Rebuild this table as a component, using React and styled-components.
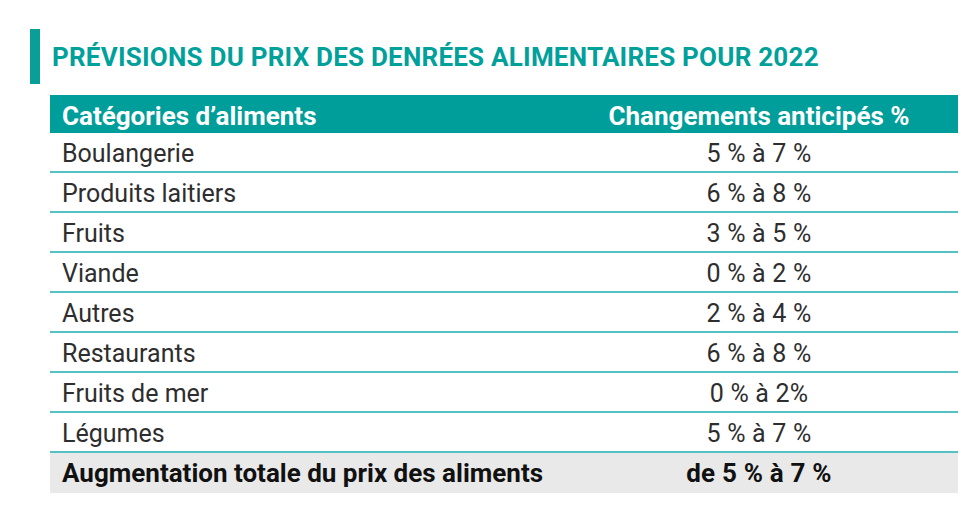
import React from "react";
import styled, { createGlobalStyle } from "styled-components";

const GlobalStyle = createGlobalStyle`
  body {
    margin: 0;
    background: #ffffff;
    font-family: Roboto, "Liberation Sans", sans-serif;
  }
`;

const rows = [
  ["Boulangerie", "5 % à 7 %"],
  ["Produits laitiers", "6 % à 8 %"],
  ["Fruits", "3 % à 5 %"],
  ["Viande", "0 % à 2 %"],
  ["Autres", "2 % à 4 %"],
  ["Restaurants", "6 % à 8 %"],
  ["Fruits de mer", "0 % à 2%"],
  ["Légumes", "5 % à 7 %"],
];

const App = () => {
  return (
    <Page>
      <GlobalStyle />
      <TitleBlock>
        <AccentBar />
        <Title>PRÉVISIONS DU PRIX DES DENRÉES ALIMENTAIRES POUR 2022</Title>
      </TitleBlock>
      <Table>
        <HeadRow>
          <HeadCell>Catégories d’aliments</HeadCell>
          <HeadCell $center>Changements anticipés %</HeadCell>
        </HeadRow>
        {rows.map(([name, value]) => (
          <Row key={name}>
            <Cell>{name}</Cell>
            <Cell $center>{value}</Cell>
          </Row>
        ))}
        <TotalRow>
          <Cell $bold>Augmentation totale du prix des aliments</Cell>
          <Cell $bold $center>de 5 % à 7 %</Cell>
        </TotalRow>
      </Table>
    </Page>
  );
};
export default App;

const Page = styled.div`
  width: 980px;
  height: 524px;
  padding: 29px 22px 0 30px;
  box-sizing: border-box;
`;

const TitleBlock = styled.div`
  display: flex;
  align-items: center;
  gap: 12px;
  height: 55px;
`;

const AccentBar = styled.div`
  width: 10px;
  align-self: stretch;
  background: #0a9e99;
`;

const Title = styled.h1`
  margin: 0;
  font-size: 26px;
  font-weight: 700;
  color: #00a09b;
  letter-spacing: 0.23px;
  white-space: nowrap;
`;

const Table = styled.div`
  margin: 11px 0 0 20px;
  display: flex;
  flex-direction: column;
`;

const HeadRow = styled.div`
  display: grid;
  grid-template-columns: 510px 1fr;
  align-items: center;
  height: 38px;
  padding-top: 3px;
  box-sizing: border-box;
  background: #009e9a;
`;

const Row = styled.div`
  display: grid;
  grid-template-columns: 510px 1fr;
  align-items: center;
  height: 40px;
  padding-top: 3px;
  box-sizing: border-box;
  border-bottom: 2px solid #55c1c4;
`;

const TotalRow = styled.div`
  display: grid;
  grid-template-columns: 510px 1fr;
  align-items: center;
  height: 40px;
  background: #e9e9e9;
`;

const HeadCell = styled.div`
  padding-left: ${(p) => (p.$center ? "0" : "12px")};
  text-align: ${(p) => (p.$center ? "center" : "left")};
  color: #ffffff;
  font-size: 26px;
  font-weight: 700;
  white-space: nowrap;
`;

const Cell = styled.div`
  padding-left: ${(p) => (p.$center ? "0" : "12px")};
  text-align: ${(p) => (p.$center ? "center" : "left")};
  color: ${(p) => (p.$bold ? "#111111" : "#2e2e2e")};
  font-size: ${(p) => (p.$bold ? "26px" : "25px")};
  font-weight: ${(p) => (p.$bold ? 700 : 400)};
  letter-spacing: ${(p) => (p.$center ? "0.2px" : "0")};
  white-space: nowrap;
`;
